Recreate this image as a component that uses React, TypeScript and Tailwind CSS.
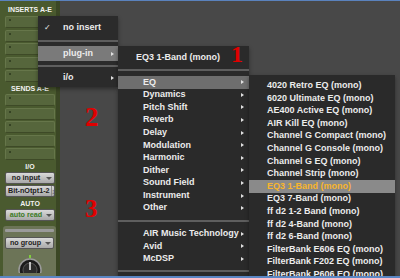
const categories = [
  "EQ",
  "Dynamics",
  "Pitch Shift",
  "Reverb",
  "Delay",
  "Modulation",
  "Harmonic",
  "Dither",
  "Sound Field",
  "Instrument",
  "Other",
];

const vendors = ["AIR Music Technology", "Avid", "McDSP"];

const eqPlugins = [
  "4020 Retro EQ (mono)",
  "6020 Ultimate EQ (mono)",
  "AE400 Active EQ (mono)",
  "AIR Kill EQ (mono)",
  "Channel G Compact (mono)",
  "Channel G Console (mono)",
  "Channel G EQ (mono)",
  "Channel Strip (mono)",
  "EQ3 1-Band (mono)",
  "EQ3 7-Band (mono)",
  "ff d2 1-2 Band (mono)",
  "ff d2 4-Band (mono)",
  "ff d2 6-Band (mono)",
  "FilterBank E606 EQ (mono)",
  "FilterBank F202 EQ (mono)",
  "FilterBank P606 EQ (mono)",
];

function Slot() {
  return (
    <div className="flex h-[12px] items-start rounded-[2px] border border-[#66764a] border-b-[#3e4a27] bg-[#56663c] pl-[3px] pt-[2px]">
      <span className="h-[2px] w-[2px] rounded-full bg-[#2c381c]" />
    </div>
  );
}

function Label({ text }: { text: string }) {
  return (
    <div className="h-[11px] text-center text-[7px] font-bold leading-[11px] text-[#f2f2f2]">
      {text}
    </div>
  );
}

function StripButton({ label, green, updown }: { label: string; green?: boolean; updown?: boolean }) {
  return (
    <div className="flex h-[12px] items-center rounded-[2px] border border-[#555] bg-linear-to-b from-[#dadada] to-[#a9a9a9] pl-[2px] pr-[2px]">
      <span
        className={`flex-1 whitespace-nowrap text-center text-[7.2px] font-bold leading-none ${
          green ? "text-[#3b7a25]" : "text-[#1d1d1d]"
        }`}
      >
        {label}
      </span>
      {updown ? (
        <span className="ml-[1px] flex h-full w-[7px] items-center justify-center border-l border-[#8a8a8a] text-[7px] leading-none text-[#555]">
          ↕
        </span>
      ) : (
        <span className="ml-[2px] h-0 w-0 border-x-[3px] border-t-[3px] border-x-transparent border-t-[#555]" />
      )}
    </div>
  );
}

function Arrow() {
  return <span className="h-0 w-0 border-y-[2.5px] border-l-[3px] border-y-transparent border-l-[#e0e0e0]" />;
}

function Separator({ h }: { h: string }) {
  return (
    <div className={`flex flex-col justify-center ${h}`}>
      <div className="h-[2px] bg-[#5e5e5e]" />
    </div>
  );
}

function CategoryRow({ text, active }: { text: string; active?: boolean }) {
  return (
    <div
      className={`flex h-[12.6px] items-center justify-between pl-[25px] pr-[5px] ${
        active ? "bg-[#6e6e6e]" : ""
      }`}
    >
      <span className="whitespace-nowrap">{text}</span>
      <Arrow />
    </div>
  );
}

export default function App() {
  return (
    <div className="relative h-[278px] w-[400px] overflow-hidden border-t border-b-2 border-t-[#5a82bd] border-b-[#5a86c4] bg-[#484848] font-['Liberation_Sans',Arial,sans-serif] text-[#ececec]">
      <div className="flex h-full">
        {/* channel strip */}
        <div className="flex h-full w-[60px] flex-col border-r-4 border-[#3b4725] bg-[#4a5a2f] pl-[5px] pr-[1px]">
          <div className="mt-[3px]">
            <div className="h-[12px] text-center text-[7px] font-bold leading-[12px] text-[#f2f2f2]">INSERTS A-E</div>
          </div>
          <div className="flex flex-col gap-[1.5px]">
            {[0, 1, 2, 3, 4].map((i) => (
              <Slot key={i} />
            ))}
          </div>
          <div className="mt-[1px]">
            <Label text="SENDS A-E" />
          </div>
          <div className="flex flex-col gap-[1.5px]">
            {[0, 1, 2, 3, 4].map((i) => (
              <Slot key={i} />
            ))}
          </div>
          <div className="mt-[1px]">
            <Label text="I/O" />
          </div>
          <div className="flex flex-col gap-[1px]">
            <StripButton label="no input" />
            <StripButton label="Bit-nOtpt1-2" updown />
          </div>
          <div className="h-[12px] text-center text-[7px] font-bold leading-[14px] text-[#f2f2f2]">AUTO</div>
          <StripButton label="auto read" green />
          <div className="-ml-[2px] -mr-[1px] mt-[5px] flex flex-1 flex-col rounded-t-[3px] bg-[#6c7457] px-[2px] pt-[3px]">
            <div className="h-[3px] rounded-[1px] bg-[#9a9a9a]" />
            <div className="mt-[5px]">
              <StripButton label="no group" />
            </div>
            <div className="mt-[6px] flex justify-center">
              <svg width="26" height="18" viewBox="0 0 26 18">
                <circle cx="13" cy="15" r="11" fill="#1a1a1a" stroke="#9a9a9a" strokeWidth="1.5" />
                <circle cx="13" cy="15" r="7" fill="#2a2a2a" stroke="#555" strokeWidth="1" />
                <line x1="13" y1="15" x2="13" y2="7" stroke="#f0f0f0" strokeWidth="1.5" />
                <rect x="12" y="0" width="2" height="3" fill="#7fd03a" />
              </svg>
            </div>
          </div>
        </div>
      </div>

      {/* menu 1 */}
      <div className="absolute left-[38px] top-[15px] w-[80px] bg-[#2b2b2b] pb-[2px] pt-[5px] text-[9px] font-bold shadow-[0_2px_4px_rgba(0,0,0,0.4)]">
        <div className="flex h-[14px] items-center">
          <span className="w-[25px] pl-[6px] font-['DejaVu_Sans',sans-serif] text-[8px]">✓</span>
          <span>no insert</span>
        </div>
        <Separator h="h-[11px]" />
        <div className="flex h-[15px] items-center justify-between bg-[#7a7a7a] pl-[25px] pr-[4px]">
          <span>plug-in</span>
          <Arrow />
        </div>
        <Separator h="h-[10px]" />
        <div className="flex h-[14px] items-center justify-between pl-[25px] pr-[4px]">
          <span>i/o</span>
          <Arrow />
        </div>
      </div>

      {/* menu 2 */}
      <div className="absolute left-[118px] top-[45px] h-[240px] w-[131px] bg-[#2a2a2a] pt-[5px] text-[9px] font-bold shadow-[0_2px_4px_rgba(0,0,0,0.4)]">
        <div className="flex h-[13px] items-center pl-[18px]">EQ3 1-Band (mono)</div>
        <Separator h="h-[12px]" />
        {categories.map((c) => (
          <CategoryRow key={c} text={c} active={c === "EQ"} />
        ))}
        <Separator h="h-[13px]" />
        {vendors.map((v) => (
          <CategoryRow key={v} text={v} />
        ))}
        <Separator h="h-[11px]" />
      </div>

      {/* menu 3 */}
      <div className="absolute left-[249px] top-[74px] h-[220px] w-[146px] bg-[#2a2a2a] pt-[4.5px] text-[9px] font-bold shadow-[0_2px_4px_rgba(0,0,0,0.4)]">
        {eqPlugins.map((p, i) => (
          <div
            key={p}
            className={`flex h-[12.6px] items-center whitespace-nowrap pl-[18px] ${
              i === 8 ? "bg-[#8a8a8a] text-[#f7b52c]" : ""
            }`}
          >
            {p}
          </div>
        ))}
      </div>

      {/* annotations */}
      <span className="absolute left-[231px] top-[41px] font-['Liberation_Serif',serif] text-[24px] font-bold leading-none text-[#e00000]">
        1
      </span>
      <span className="absolute left-[85px] top-[103px] font-['Liberation_Serif',serif] text-[27px] font-bold leading-none text-[#e00000]">
        2
      </span>
      <span className="absolute left-[85px] top-[195px] font-['Liberation_Serif',serif] text-[25px] font-bold leading-none text-[#e00000]">
        3
      </span>
    </div>
  );
}
